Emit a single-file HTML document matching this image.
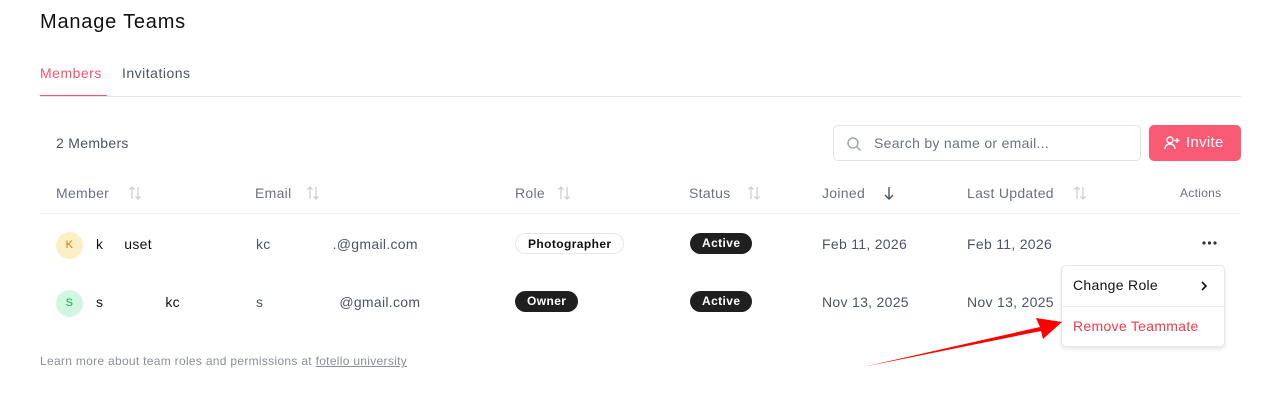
<!DOCTYPE html>
<html><head><style>
*{box-sizing:border-box;margin:0;padding:0}
body{width:1270px;height:407px;background:#fff;font-family:"Liberation Sans",sans-serif;color:#111;position:relative;overflow:hidden;letter-spacing:0.3px}
.a{position:absolute;white-space:nowrap}
.h{font-size:14px;color:#6b7280}
.c{font-size:14px;color:#4b5563}
.pill{position:absolute;height:21px;border-radius:11px;font-size:12px;font-weight:bold;padding:0 12px;line-height:20px;letter-spacing:0.4px}
.srt{position:absolute;top:185px}
</style></head><body>
<div class="a" style="left:40px;top:11px;font-size:20px;color:#111;letter-spacing:0.8px">Manage Teams</div>
<div class="a" style="left:40px;top:65px;font-size:14px;color:#f0566e;letter-spacing:0.5px">Members</div>
<div class="a" style="left:122px;top:65px;font-size:14px;color:#4b5563;letter-spacing:0.5px">Invitations</div>
<div class="a" style="left:40px;top:95px;width:67px;height:2px;background:#f0566e"></div>
<div class="a" style="left:40px;top:96px;width:1201px;height:1px;background:#e5e7eb"></div>
<div class="a c" style="left:56px;top:135px">2 Members</div>
<div class="a" style="left:833px;top:125px;width:308px;height:36px;border:1px solid #e2e4e8;border-radius:5px">
<svg style="position:absolute;left:12px;top:10px" width="16" height="16" viewBox="0 0 16 16" fill="none" stroke="#9ca3af" stroke-width="1.4"><circle cx="7" cy="7" r="5"/><path d="M11 11l3.5 3.5"/></svg>
<span style="position:absolute;left:40px;top:9px;font-size:14px;color:#6b7280">Search by name or email...</span></div>
<div class="a" style="left:1149px;top:125px;width:92px;height:36px;background:#f95a74;border-radius:5px;color:#fff;font-size:15px;line-height:36px;padding-left:37px">Invite
<svg style="position:absolute;left:15px;top:10px" width="17" height="16" viewBox="0 0 17 16" fill="none" stroke="#fff" stroke-width="1.4"><circle cx="6" cy="5" r="3"/><path d="M1 14c0-3 2-5 5-5s5 2 5 5M13 3v5M10.5 5.5h5"/></svg></div>
<div class="a h" style="left:56px;top:185px">Member</div>
<div class="a h" style="left:255px;top:185px">Email</div>
<div class="a h" style="left:515px;top:185px">Role</div>
<div class="a h" style="left:689px;top:185px">Status</div>
<div class="a h" style="left:822px;top:185px">Joined</div>
<div class="a h" style="left:967px;top:185px">Last Updated</div>
<svg class="srt" style="left:128px" width="14" height="16" viewBox="0 0 14 16" fill="none" stroke="#cbd0d8" stroke-width="1.3"><path d="M4 14V2M1.5 4.5L4 2l2.5 2.5M10 2v12M7.5 11.5L10 14l2.5-2.5"/></svg>
<svg class="srt" style="left:306px" width="14" height="16" viewBox="0 0 14 16" fill="none" stroke="#cbd0d8" stroke-width="1.3"><path d="M4 14V2M1.5 4.5L4 2l2.5 2.5M10 2v12M7.5 11.5L10 14l2.5-2.5"/></svg>
<svg class="srt" style="left:557px" width="14" height="16" viewBox="0 0 14 16" fill="none" stroke="#cbd0d8" stroke-width="1.3"><path d="M4 14V2M1.5 4.5L4 2l2.5 2.5M10 2v12M7.5 11.5L10 14l2.5-2.5"/></svg>
<svg class="srt" style="left:747px" width="14" height="16" viewBox="0 0 14 16" fill="none" stroke="#cbd0d8" stroke-width="1.3"><path d="M4 14V2M1.5 4.5L4 2l2.5 2.5M10 2v12M7.5 11.5L10 14l2.5-2.5"/></svg>
<svg class="srt" style="left:883px" width="12" height="16" viewBox="0 0 12 16" fill="none" stroke="#4b5563" stroke-width="1.4"><path d="M6 2v12M2 10l4 4 4-4"/></svg>
<svg class="srt" style="left:1073px" width="14" height="16" viewBox="0 0 14 16" fill="none" stroke="#cbd0d8" stroke-width="1.3"><path d="M4 14V2M1.5 4.5L4 2l2.5 2.5M10 2v12M7.5 11.5L10 14l2.5-2.5"/></svg>
<div class="a" style="left:1180px;top:186px;font-size:12px;color:#6b7280">Actions</div>
<div class="a" style="left:40px;top:213px;width:1201px;height:1px;background:#eef0f2"></div>
<div class="a" style="left:56px;top:232px;width:27px;height:27px;border-radius:50%;background:#fdefc4;color:#d97706;font-size:11px;text-align:center;line-height:27px">K</div>
<div class="a" style="left:96px;top:236px;font-size:14px">k&nbsp;&nbsp;&nbsp;&nbsp;&nbsp;uset</div>
<div class="a c" style="left:256px;top:236px">kc<span style="margin-left:62px">.@gmail.com</span></div>
<div class="pill" style="left:515px;top:233px;border:1px solid #e5e7eb;color:#111">Photographer</div>
<div class="pill" style="left:690px;top:233px;background:#1f1f1f;color:#fff">Active</div>
<div class="a c" style="left:822px;top:236px">Feb 11, 2026</div>
<div class="a c" style="left:967px;top:236px">Feb 11, 2026</div>
<svg class="a" style="left:1202px;top:240px" width="16" height="6"><circle cx="2" cy="3" r="1.6" fill="#333"/><circle cx="7.5" cy="3" r="1.6" fill="#333"/><circle cx="13" cy="3" r="1.6" fill="#333"/></svg>
<div class="a" style="left:56px;top:290px;width:27px;height:27px;border-radius:50%;background:#d1f7e3;color:#16a34a;font-size:11px;text-align:center;line-height:27px">S</div>
<div class="a" style="left:96px;top:294px;font-size:14px">s<span style="margin-left:62px">kc</span></div>
<div class="a c" style="left:256px;top:294px">s<span style="margin-left:76px">@gmail.com</span></div>
<div class="pill" style="left:515px;top:291px;background:#1f1f1f;color:#fff">Owner</div>
<div class="pill" style="left:690px;top:291px;background:#1f1f1f;color:#fff">Active</div>
<div class="a c" style="left:822px;top:294px">Nov 13, 2025</div>
<div class="a c" style="left:967px;top:294px">Nov 13, 2025</div>
<div class="a" style="left:1061px;top:265px;width:164px;height:82px;background:#fff;border:1px solid #e5e7eb;border-radius:5px;box-shadow:0 2px 5px rgba(0,0,0,.1)">
<div style="position:absolute;left:11px;top:11px;font-size:14px;color:#111">Change Role</div>
<svg style="position:absolute;left:138px;top:14px" width="8" height="12" viewBox="0 0 8 12" fill="none" stroke="#111" stroke-width="1.6"><path d="M2 2l4 4-4 4"/></svg>
<div style="position:absolute;left:0;top:40px;width:162px;height:1px;background:#eceef0"></div>
<div style="position:absolute;left:11px;top:52px;font-size:14px;color:#ef3b4a">Remove Teammate</div></div>
<svg class="a" style="left:0;top:0" width="1270" height="407"><polygon points="863,367 1040,327 1036,318 1062,322 1043,339 1041,331" fill="#f00"/></svg>
<div class="a" style="left:40px;top:354px;font-size:12px;color:#8a8f98">Learn more about team roles and permissions at <span style="text-decoration:underline">fotello university</span></div>
</body></html>
